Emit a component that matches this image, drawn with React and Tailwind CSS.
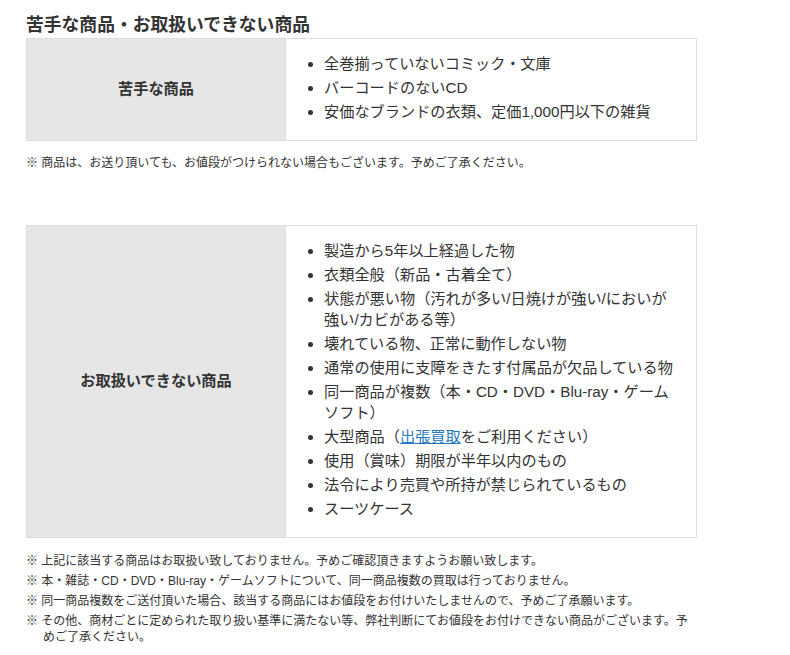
import React from 'react';

const font = { fontFamily: '"Liberation Sans", "Noto Sans CJK JP", sans-serif' };

const BadList = ({ items }) => (
  <ul className="list-disc pl-[23px]">
    {items.map((item, i) => (
      <li key={i} className="leading-[21px] mb-[3px] whitespace-nowrap">{item}</li>
    ))}
  </ul>
);

const ItemTable = ({ label, items }) => (
  <div className="flex border border-[#dddddd]">
    <div className="w-[259px] shrink-0 bg-[#e6e6e6] border-r border-[#dddddd] flex items-center justify-center font-bold text-[15.2px]">
      {label}
    </div>
    <div className="flex-1 pt-[14px] pb-[15px] pl-[15px] pr-[17px] text-[15.2px]">
      <BadList items={items} />
    </div>
  </div>
);

const Note = ({ children }) => (
  <p className="text-[12px] leading-[16px] pl-[17px] -indent-[17px]">※ {children}</p>
);

export default function App() {
  const weak = [
    '全巻揃っていないコミック・文庫',
    'バーコードのないCD',
    '安価なブランドの衣類、定価1,000円以下の雑貨',
  ];
  const refused = [
    '製造から5年以上経過した物',
    '衣類全般（新品・古着全て）',
    <>状態が悪い物（汚れが多い/日焼けが強い/においが<br />強い/カビがある等）</>,
    '壊れている物、正常に動作しない物',
    '通常の使用に支障をきたす付属品が欠品している物',
    <>同一商品が複数（本・CD・DVD・Blu-ray・ゲーム<br />ソフト）</>,
    <>大型商品（<a href="#" className="text-[#2477c2] underline">出張買取</a>をご利用ください）</>,
    '使用（賞味）期限が半年以内のもの',
    '法令により売買や所持が禁じられているもの',
    'スーツケース',
  ];

  return (
    <div className="w-[790px] min-h-[655px] bg-white text-[#333333]" style={font}>
      <div className="ml-[26px] w-[671px]">
        <h2 className="pt-[12px] text-[17.8px] leading-[26px] font-bold">苦手な商品・お取扱いできない商品</h2>
        <ItemTable label="苦手な商品" items={weak} />
        <div className="mt-[14px]">
          <Note>商品は、お送り頂いても、お値段がつけられない場合もございます。予めご了承ください。</Note>
        </div>
        <div className="mt-[54px]">
          <ItemTable label="お取扱いできない商品" items={refused} />
        </div>
        <div className="mt-[15px] flex flex-col gap-[4px]">
          <Note>上記に該当する商品はお取扱い致しておりません。予めご確認頂きますようお願い致します。</Note>
          <Note>本・雑誌・CD・DVD・Blu-ray・ゲームソフトについて、同一商品複数の買取は行っておりません。</Note>
          <Note>同一商品複数をご送付頂いた場合、該当する商品にはお値段をお付けいたしませんので、予めご了承願います。</Note>
          <Note>その他、商材ごとに定められた取り扱い基準に満たない等、弊社判断にてお値段をお付けできない商品がございます。予<br />めご了承ください。</Note>
        </div>
      </div>
    </div>
  );
}
